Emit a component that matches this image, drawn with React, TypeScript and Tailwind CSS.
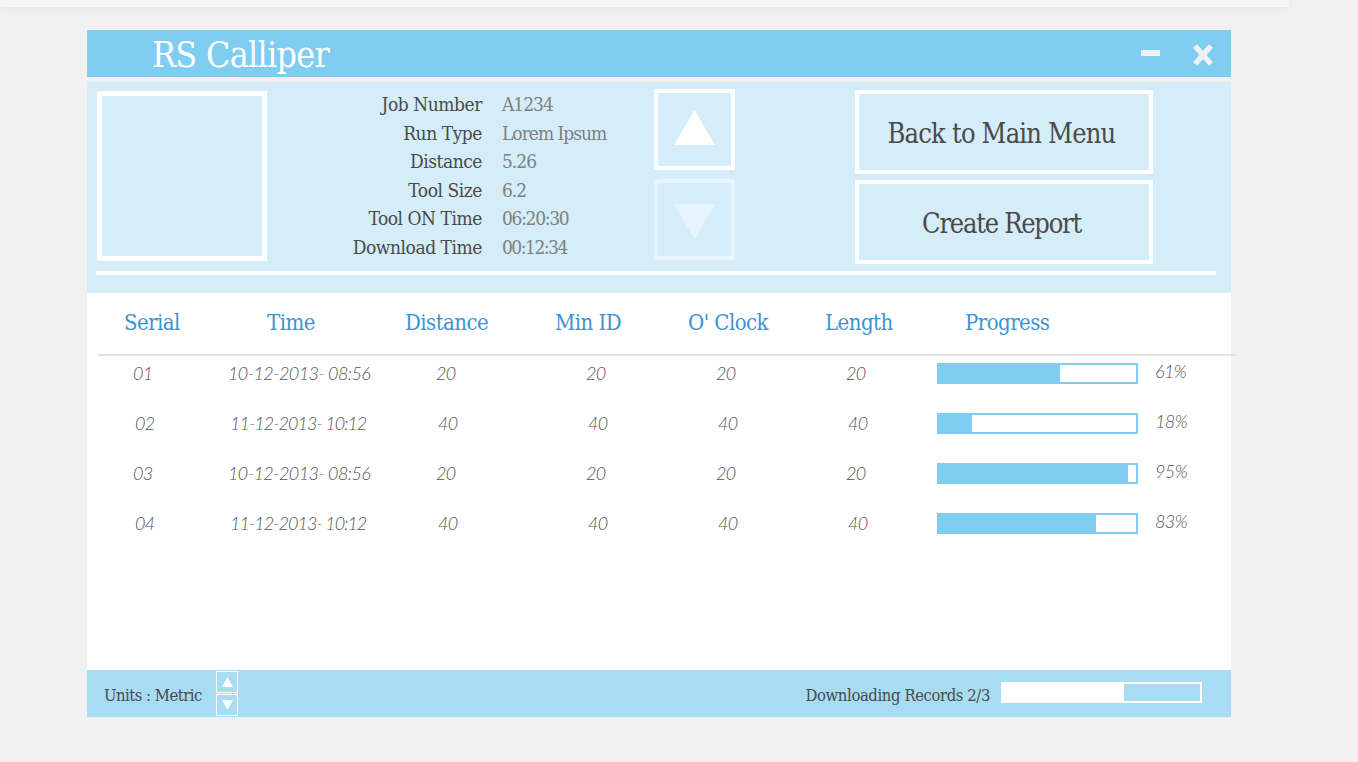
const slab = "font-['DejaVu_Serif_Condensed','Liberation_Serif',serif]";
const rows = [
  { s: "01", t: "10-12-2013- 08:56", v: "20", p: 61, f: 121, x: "", tt: "tracking-[-0.6px]" },
  { s: "02", t: "11-12-2013- 10:12", v: "40", p: 18, f: 33, x: "ml-[2px]", tt: "tracking-[-1px]" },
  { s: "03", t: "10-12-2013- 08:56", v: "20", p: 95, f: 189, x: "", tt: "tracking-[-0.6px]" },
  { s: "04", t: "11-12-2013- 10:12", v: "40", p: 83, f: 157, x: "ml-[2px]", tt: "tracking-[-1px]" },
];
const info = [
  ["Job Number", "A1234", "tracking-[-1px]"],
  ["Run Type", "Lorem Ipsum", "tracking-[-1px]"],
  ["Distance", "5.26", "tracking-[-1px]"],
  ["Tool Size", "6.2", "tracking-[-1px]"],
  ["Tool ON Time", "06:20:30", "tracking-[-1.3px]"],
  ["Download Time", "00:12:34", "tracking-[-1.5px]"],
];
const heads: [string, string][] = [
  ["Serial", "w-[143px]"],
  ["Time", "w-[138px]"],
  ["Distance", "w-[150px]"],
  ["Min ID", "w-[133px]"],
  ["O' Clock", "w-[137px]"],
  ["Length", "w-[140px]"],
  ["Progress", "w-[120px]"],
];

function Tri({ up, w, h, c }: { up: boolean; w: number; h: number; c: string }) {
  return (
    <svg width={w} height={h} viewBox="0 0 10 10" preserveAspectRatio="none">
      <polygon points={up ? "5,0 10,10 0,10" : "0,0 10,0 5,10"} fill={c} />
    </svg>
  );
}

export default function App() {
  return (
    <div className="h-[762px] w-[1358px] overflow-hidden bg-[#f1f1f1]">
      <div className="h-[7px] w-[1289px] bg-[#f5f5f5] shadow-[0_2px_6px_rgba(0,0,0,0.06)]" />
      <div className="ml-[87px] mt-[23px] w-[1144px]">
        <div className="flex h-[47px] items-center bg-[#7fcdf0] pl-[65px] pr-[17px]">
          <div className={`${slab} pt-[2px] text-[35.5px] leading-[45px] tracking-[-0.7px] text-white`}>RS Calliper</div>
          <div className="ml-auto flex items-center">
            <div className="mr-[32px] mt-[-1px] h-[6px] w-[19px] bg-[#f1f1f1]" />
            <svg width="22" height="22" viewBox="0 0 22 22" className="mt-[2px]">
              <path d="M3 2 L19 20 M19 2 L3 20" stroke="#f1f1f1" strokeWidth="5.5" fill="none" />
            </svg>
          </div>
        </div>

        <div className="mt-[5px] h-[211px] bg-[#d4edf9] pt-[7px]">
          <div className="flex h-[182px] items-start">
            <div className="ml-[10px] mt-[2px] h-[170px] w-[170px] shrink-0 border-[5px] border-white" />
            <div className={`${slab} mt-[1px] grid w-[387px] grid-cols-[215px_1fr] gap-x-[20px] text-[19px] leading-[28.6px]`}>
              {info.map(([a, b, t]) => (
                <div key={a} className="contents">
                  <div className="text-right tracking-[-0.45px] text-[#4a4a4a]">{a}</div>
                  <div className={`${t} text-[#808080]`}>{b}</div>
                </div>
              ))}
            </div>
            <div className="flex w-[81px] shrink-0 flex-col gap-[9px]">
              <div className="flex h-[81px] items-center justify-center border-[4px] border-white pb-[4px]">
                <Tri up w={41} h={35} c="#ffffff" />
              </div>
              <div className="flex h-[81px] items-center justify-center border-[4px] border-[#e6f5fb] pt-[4px]">
                <Tri up={false} w={41} h={35} c="#e6f5fb" />
              </div>
            </div>
            <div className={`${slab} ml-[120px] mt-[1px] flex w-[298px] shrink-0 flex-col gap-[6px] text-[#4a4a4a]`}>
              <div className="flex h-[84px] items-center justify-center border-[4px] border-white pr-[5px] pt-[5px] text-[27px] tracking-[-0.8px]">Back to Main Menu</div>
              <div className="flex h-[84px] items-center justify-center border-[4px] border-white pr-[5px] pt-[5px] text-[27px] tracking-[-1.25px]">Create Report</div>
            </div>
          </div>
          <div className="ml-[9px] h-[4px] w-[1120px] bg-white" />
        </div>

        <div className="h-[377px] bg-white">
          <div className={`${slab} flex h-[61px] items-center pb-[3px] pl-[37px] text-[22px] tracking-[-0.55px] text-[#3a94d3]`}>
            {heads.map(([h, w]) => (
              <div key={h} className={`${w} shrink-0`}>{h}</div>
            ))}
          </div>
          <div className="ml-[11px] h-[2px] w-[1138px] bg-[#e2e2e2]" />
          {rows.map((r) => (
            <div key={r.s} className="mb-[16px] flex h-[34px] items-center font-['Lato',sans-serif] text-[18px] font-light italic tracking-[-0.6px] text-[#555555]">
              <div className="w-[46px] shrink-0" />
              <div className="w-[95px] shrink-0"><span className={r.x}>{r.s}</span></div>
              <div className={`w-[208px] shrink-0 ${r.tt}`}><span className={r.x}>{r.t}</span></div>
              <div className="w-[150px] shrink-0"><span className={r.x}>{r.v}</span></div>
              <div className="w-[130px] shrink-0"><span className={r.x}>{r.v}</span></div>
              <div className="w-[130px] shrink-0"><span className={r.x}>{r.v}</span></div>
              <div className="w-[91px] shrink-0"><span className={r.x}>{r.v}</span></div>
              <div className="mt-[1px] h-[21px] w-[201px] shrink-0 border-[2px] border-[#7fcdf0]">
                <div className="h-full bg-[#7fcdf0]" style={{ width: r.f }} />
              </div>
              <div className="ml-[17px] mt-[-4px]">{r.p}%</div>
            </div>
          ))}
        </div>

        <div className={`${slab} flex h-[47px] items-center bg-[#a7dcf3] pl-[17px] text-[16.5px] text-[#4a4a4a]`}>
          <div className="w-[112px] shrink-0 pt-[5px] tracking-[-0.5px]">Units : Metric</div>
          <div className="flex flex-col gap-[1px]">
            <div className="flex h-[22px] w-[22px] items-center justify-center border border-white">
              <Tri up w={11} h={10} c="#ffffff" />
            </div>
            <div className="flex h-[22px] w-[22px] items-center justify-center border border-white">
              <Tri up={false} w={11} h={10} c="#ffffff" />
            </div>
          </div>
          <div className="ml-auto pt-[5px] tracking-[-0.4px]">Downloading Records 2/3</div>
          <div className="mb-[2px] ml-[11px] mr-[29px] h-[21px] w-[201px] shrink-0 border-[2px] border-white bg-[#a7dcf3]">
            <div className="h-full w-[121px] bg-white" />
          </div>
        </div>
      </div>
    </div>
  );
}
